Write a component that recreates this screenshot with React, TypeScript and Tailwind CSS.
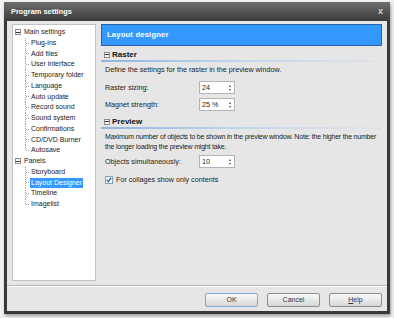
import React from "react";

const font = { fontFamily: '"Liberation Sans", Arial, sans-serif' };

const tree: { label: string; level: number; last?: boolean; selected?: boolean }[] = [
  { label: "Main settings", level: 0 },
  { label: "Plug-ins", level: 1 },
  { label: "Add files", level: 1 },
  { label: "User interface", level: 1 },
  { label: "Temporary folder", level: 1 },
  { label: "Language", level: 1 },
  { label: "Auto update", level: 1 },
  { label: "Record sound", level: 1 },
  { label: "Sound system", level: 1 },
  { label: "Confirmations", level: 1 },
  { label: "CD/DVD Burner", level: 1 },
  { label: "Autosave", level: 1, last: true },
  { label: "Panels", level: 0 },
  { label: "Storyboard", level: 1 },
  { label: "Layout Designer", level: 1, selected: true },
  { label: "Timeline", level: 1 },
  { label: "Imagelist", level: 1, last: true },
];

function MinusBox() {
  return (
    <span className="flex h-[6px] w-[6px] shrink-0 items-center justify-center border border-[#8c8c8c] bg-white">
      <span className="h-px w-[4px] bg-[#333]" />
    </span>
  );
}

function Connector({ last }: { last?: boolean }) {
  return (
    <svg width="5" height="11" className="shrink-0">
      <line x1="0.5" y1="0" x2="0.5" y2={last ? 5.5 : 11} stroke="#a0a0a0" strokeDasharray="1 1" />
      <line x1="1" y1="5.5" x2="5" y2="5.5" stroke="#a0a0a0" strokeDasharray="1 1" />
    </svg>
  );
}

function Spin({ value }: { value: string }) {
  return (
    <div className="flex h-[13px] w-[36px] items-center justify-between border border-[#b4b4b4] bg-white pl-[2px] pr-[3px] text-[7.2px] text-[#222]">
      <span>{value}</span>
      <span className="flex flex-col items-center gap-[2px]">
        <span className="h-0 w-0 border-x-[1.5px] border-b-[2px] border-x-transparent border-b-[#444]" />
        <span className="h-0 w-0 border-x-[1.5px] border-t-[2px] border-x-transparent border-t-[#444]" />
      </span>
    </div>
  );
}

function Section({ title }: { title: string }) {
  return (
    <div className="flex flex-col">
      <div className="flex h-[11px] items-center gap-[1px] pl-[3px]">
        <MinusBox />
        <span className="ml-[1px] text-[8px] font-bold text-[#111]">{title}</span>
      </div>
      <div className="h-[2px] bg-gradient-to-r from-[#8fb4e0] via-[#c4d6ea] to-[#e0e4ea]" />
    </div>
  );
}

function Btn({ children, def }: { children: React.ReactNode; def?: boolean }) {
  return (
    <div
      className={`flex h-[14px] w-[53px] items-center justify-center rounded-[2px] border bg-gradient-to-b from-[#fbfbfb] to-[#d6d6d6] text-[7px] text-[#333] ${
        def ? "border-[#7ea6d0]" : "border-[#8e8e8e]"
      }`}
    >
      {children}
    </div>
  );
}

export default function App() {
  return (
    <div className="h-[318px] w-[394px] bg-[#f2f2f2] pl-[4px] pt-[2px]" style={font}>
      <div className="flex h-[312px] w-[386px] flex-col border-x-[3px] border-b-[3px] border-[#3a3a3a] shadow-[1px_2px_3px_rgba(0,0,0,0.35)]">
        <div className="-mx-[3px] flex h-[19px] items-center justify-between bg-gradient-to-b from-[#6e6e6e] to-[#3b3b3b] pl-[7px] pr-[7px]">
          <span className="text-[7.4px] font-bold text-white">Program settings</span>
          <span className="text-[9px] font-bold leading-none text-[#d0d0d0]">x</span>
        </div>
        <div className="flex flex-1 flex-col bg-[#e6e6e6]">
          <div className="flex h-[260px] gap-[5px] px-[5px] pt-[3px]">
            <div className="w-[84px] border border-[#c2c2c2] bg-white pl-[2px] pt-[2px]">
              {tree.map((t) => (
                <div key={t.label} className="flex h-[10.75px] items-center text-[7px] text-[#222]">
                  {t.level === 0 ? (
                    <>
                      <MinusBox />
                      <span className="ml-[3px]">{t.label}</span>
                    </>
                  ) : (
                    <>
                      <span className="w-[10px] shrink-0" />
                      <Connector last={t.last} />
                      <span className={`px-[1px] ${t.selected ? "bg-[#3399ff] text-white" : ""}`}>
                        {t.label}
                      </span>
                    </>
                  )}
                </div>
              ))}
            </div>
            <div className="flex flex-1 flex-col">
              <div className="flex h-[22px] items-center border border-[#2a62a8] bg-[#3399ff] pl-[5px]">
                <span className="text-[7.6px] font-bold tracking-[0.2px] text-white">Layout designer</span>
              </div>
              <div className="mt-[3px]">
                <Section title="Raster" />
              </div>
              <div className="pl-[4px] text-[7.2px] leading-[10px] text-[#222]">
                <p className="mt-[3px]">Define the settings for the raster in the preview window.</p>
                <div className="mt-[6px] flex items-center">
                  <span className="w-[94px]">Raster sizing:</span>
                  <Spin value="24" />
                </div>
                <div className="mt-[4px] flex items-center">
                  <span className="w-[94px]">Magnet strength:</span>
                  <Spin value="25 %" />
                </div>
              </div>
              <div className="mt-[5px]">
                <Section title="Preview" />
              </div>
              <div className="pl-[4px] text-[7.2px] leading-[10px] text-[#222]">
                <p className="mt-[3px] whitespace-nowrap text-[7px] tracking-[-0.2px]">
                  Maximum number of objects to be shown in the preview window. Note: the higher the number
                  <br />
                  the longer loading the preview might take.
                </p>
                <div className="mt-[3px] flex items-center">
                  <span className="w-[94px]">Objects simultaneously:</span>
                  <Spin value="10" />
                </div>
                <div className="mt-[7px] flex items-center gap-[3px]">
                  <span className="flex h-[8px] w-[8px] items-center justify-center border border-[#8a9fb8] bg-gradient-to-br from-[#e8edf3] to-white">
                    <svg width="6" height="6" viewBox="0 0 6 6">
                      <path d="M0.8 3 L2.3 4.6 L5.2 1" fill="none" stroke="#2f56a8" strokeWidth="1.2" />
                    </svg>
                  </span>
                  <span>For collages show only contents</span>
                </div>
              </div>
            </div>
          </div>
          <div className="mt-[4px] h-px bg-[#b5b5b5]" />
          <div className="h-px bg-white" />
          <div className="flex justify-end gap-[9px] pr-[5px] pt-[6px]">
            <Btn def>OK</Btn>
            <Btn>Cancel</Btn>
            <Btn>
              <span className="underline">H</span>elp
            </Btn>
          </div>
        </div>
      </div>
    </div>
  );
}
